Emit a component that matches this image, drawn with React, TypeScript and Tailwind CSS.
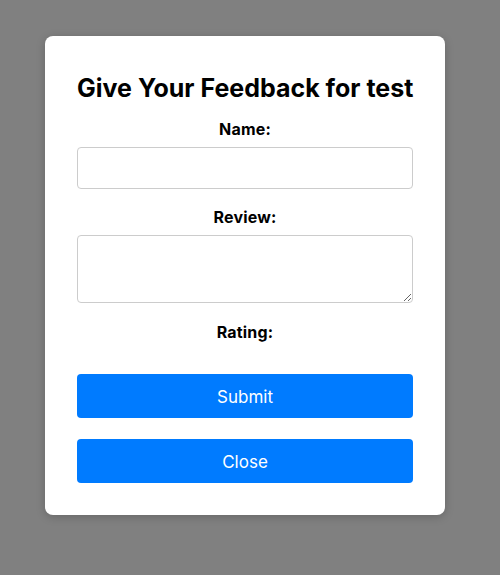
import React, { useState } from 'react';

const FeedbackModal: React.FC = () => {
  const [name, setName] = useState('');
  const [review, setReview] = useState('');

  return (
    <div className="min-h-[575px] w-full bg-[#808080] pt-9 font-['Inter',sans-serif]">
      <div className="ml-[45px] w-[400px] rounded-lg bg-white px-8 pb-8 pt-8 shadow-[0_2px_10px_rgba(0,0,0,0.2)]">
        <h2 className="mt-[3px] whitespace-nowrap text-center text-[25px] font-bold leading-[34px] text-black">
          Give Your Feedback for test
        </h2>

        <label className="mt-[12px] block text-center text-[16px] font-bold leading-6 tracking-[0.2px] text-black">Name:</label>
        <input
          type="text"
          value={name}
          onChange={(e) => setName(e.target.value)}
          className="mt-[6px] block h-[42px] w-full rounded border border-[#ccc] px-2 outline-none"
        />

        <label className="mt-4 block text-center text-[16px] font-bold leading-6 tracking-[0.2px] text-black">Review:</label>
        <textarea
          value={review}
          onChange={(e) => setReview(e.target.value)}
          className="mt-[6px] block h-[68px] w-full rounded border border-[#ccc] px-2 outline-none"
        />

        <label className="mt-[17px] block text-center text-[16px] font-bold leading-6 tracking-[0.2px] text-black">Rating:</label>
        <div className="h-[30px]" />

        <button className="block h-[44px] w-full rounded bg-[#007bff] pt-1 text-[17px] text-white">Submit</button>
        <button className="mt-[21px] block h-[44px] w-full rounded bg-[#007bff] pt-1 text-[17px] text-white">Close</button>
      </div>
    </div>
  );
};

export default FeedbackModal;
